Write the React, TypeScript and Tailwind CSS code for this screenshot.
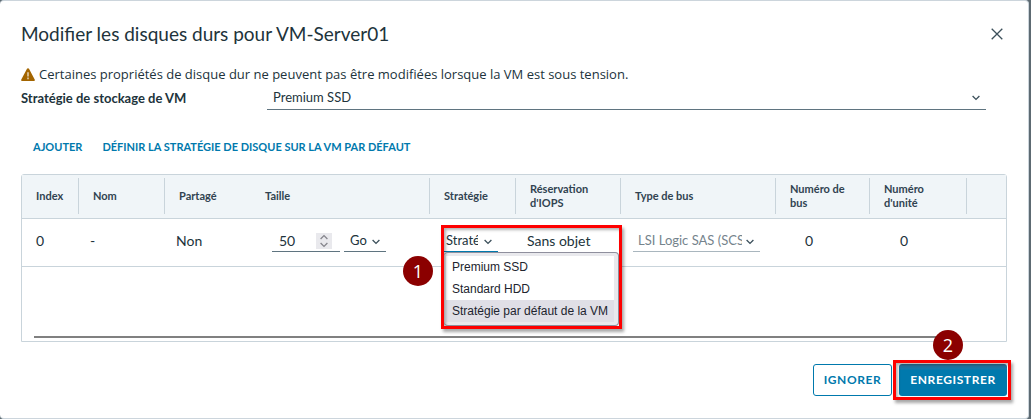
import type { ReactNode } from "react";
import { useState } from "react";

const policies = ["Premium SSD", "Standard HDD", "Stratégie par défaut de la VM"];

const columns = [
  { label: "Index", width: "w-[57px]", divider: true },
  { label: "Nom", width: "w-[86px]", divider: true },
  { label: "Partagé", width: "w-[86px]", divider: false },
  { label: "Taille", width: "w-[179px]", divider: true },
  { label: "Stratégie", width: "w-[86px]", divider: true },
  { label: "Réservation d'IOPS", width: "w-[105px]", divider: true },
  { label: "Type de bus", width: "w-[155px]", divider: true },
  { label: "Numéro de bus", width: "w-[94px]", divider: true },
  { label: "Numéro d'unité", width: "w-[97px]", divider: true },
  { label: "", width: "", divider: false },
];

function Chevron({ className = "" }: { className?: string }) {
  return (
    <svg viewBox="0 0 8 6" className={`h-[6px] w-[8px] ${className}`} fill="none" stroke="currentColor" strokeWidth="1.3">
      <path d="M0.6 1 L4 4.4 L7.4 1" />
    </svg>
  );
}

function WarningIcon() {
  return (
    <svg viewBox="0 0 14 13" className="h-[13px] w-[14px] shrink-0">
      <path d="M7 0.2 C7.5 0.2 7.8 0.4 8 0.8 L13.7 11.4 C14.1 12.2 13.7 13 12.8 13 L1.2 13 C0.3 13 -0.1 12.2 0.3 11.4 L6 0.8 C6.2 0.4 6.5 0.2 7 0.2 Z" fill="#a36500" />
      <path d="M7 4.2 V8.4 M7 9.6 V11.2" stroke="#e6d3b8" strokeWidth="1.5" />
    </svg>
  );
}

type SelectProps = {
  id?: string;
  label?: string;
  value: string;
  options: string[];
  className: string;
  selectClassName: string;
  iconClassName: string;
  disabled?: boolean;
  onChange?: (value: string) => void;
};

function Select({ id, label, value, options, className, selectClassName, iconClassName, disabled, onChange }: SelectProps) {
  return (
    <div className={`relative border-b ${className}`}>
      <select
        id={id}
        aria-label={label}
        value={value}
        disabled={disabled}
        onChange={(e) => onChange?.(e.target.value)}
        className={`block w-full appearance-none bg-transparent outline-none disabled:opacity-100 ${selectClassName}`}
      >
        {options.map((option) => (
          <option key={option}>{option}</option>
        ))}
      </select>
      <Chevron className={`pointer-events-none absolute text-[#3b4f5a] ${iconClassName}`} />
    </div>
  );
}

function StepBadge({ className, children }: { className: string; children: ReactNode }) {
  return (
    <span
      className={`absolute z-20 flex h-[30px] w-[30px] items-center justify-center rounded-full bg-[#8b0000] font-['Open_Sans',sans-serif] text-[18px] font-normal text-white ${className}`}
    >
      {children}
    </span>
  );
}

export default function App() {
  const [storage, setStorage] = useState("Premium SSD");
  const [size, setSize] = useState(50);
  const [unit, setUnit] = useState("Go");
  const [policy, setPolicy] = useState(policies[2]);

  return (
    <div className="bg-[#5d6a72] pr-[2px] font-[Lato,sans-serif] text-[#21333b]">
      <section
        role="dialog"
        aria-labelledby="dialog-title"
        className="rounded-[4px] border-t border-r border-b border-[#ccd5dc] bg-white pt-5 pr-[21px] pb-[22px] pl-[21px]"
      >
        <header className="flex h-[26px] items-center justify-between pr-1">
          <h1 id="dialog-title" className="text-[19px] leading-[26px]">
            Modifier les disques durs pour VM-Server01
          </h1>
          <button aria-label="Fermer" className="text-[#3b4f5a]">
            <svg viewBox="0 0 12 12" className="h-3 w-3" fill="none" stroke="currentColor" strokeWidth="1.3">
              <path d="M0.7 0.7 L11.3 11.3 M11.3 0.7 L0.7 11.3" />
            </svg>
          </button>
        </header>

        <p className="mt-[17px] flex h-[21px] items-center gap-1 font-['Open_Sans',sans-serif] text-[13px]">
          <WarningIcon />
          Certaines propriétés de disque dur ne peuvent pas être modifiées lorsque la VM est sous tension.
        </p>

        <div className="flex h-6 items-center pr-[21px]">
          <label htmlFor="storage-policy" className="w-[246px] shrink-0 pt-[3px] text-[13px] font-bold">
            Stratégie de stockage de VM
          </label>
          <Select
            id="storage-policy"
            value={storage}
            options={policies}
            onChange={setStorage}
            className="flex-1 border-[#5f7480]"
            selectClassName="h-6 pt-[3px] pr-6 pl-[6px] text-[13px]"
            iconClassName="top-[10px] right-[6px]"
          />
        </div>

        <div className="mt-7 flex h-5 items-center gap-5 pl-3 text-[11px] font-bold text-[#0079ad]">
          <button>AJOUTER</button>
          <button>DÉFINIR LA STRATÉGIE DE DISQUE SUR LA VM PAR DÉFAUT</button>
        </div>

        <div className="mt-[17px] h-[168px] rounded-t-[3px] border border-[#c9d4db]">
          <table className="w-full table-fixed border-collapse text-left">
            <thead className="bg-[#f0f5f8]">
              <tr className="h-[43px] border-b border-[#c9d4db]">
                {columns.map((col, index) => (
                  <th key={index} className={`p-0 text-[11px] leading-[14px] font-bold text-[#314351] ${col.width}`}>
                    <div className={`flex h-9 items-center pr-2 pl-[14px] ${col.divider ? "border-r border-[#c9d4db]" : ""}`}>
                      {col.label}
                    </div>
                  </th>
                ))}
              </tr>
            </thead>
            <tbody>
              <tr className="h-[48px] border-b border-[#c9d4db] text-[14px]">
                <td className="pt-0 pr-0 pb-[3px] pl-[14px]">0</td>
                <td className="pt-0 pr-0 pb-[3px] pl-[11px]">-</td>
                <td className="pt-0 pr-0 pb-[3px] pl-[11px]">Non</td>
                <td className="pt-0 pr-0 pb-[2px] pl-[21px]">
                  <div className="flex gap-1">
                    <div className="flex h-[22px] w-[68px] items-center border-b border-[#5f7480] pr-2 pl-[7px]">
                      <input
                        type="number"
                        aria-label="Taille"
                        value={size}
                        onChange={(e) => setSize(Number(e.target.value))}
                        className="w-0 flex-1 bg-transparent text-[14px] outline-none [appearance:textfield] [&::-webkit-inner-spin-button]:appearance-none"
                      />
                      <div className="flex h-4 w-4 flex-col items-center justify-center gap-[2px] bg-[#e9e9ed] text-[#85858c]">
                        <button aria-label="Augmenter" onClick={() => setSize(size + 1)}>
                          <Chevron className="block h-[5px] rotate-180" />
                        </button>
                        <button aria-label="Diminuer" onClick={() => setSize(size - 1)}>
                          <Chevron className="block h-[5px]" />
                        </button>
                      </div>
                    </div>
                    <Select
                      label="Unité"
                      value={unit}
                      options={["Mo", "Go", "To"]}
                      onChange={setUnit}
                      className="w-[42px] border-[#5f7480]"
                      selectClassName="h-[21px] pr-4 pl-[6px] text-[13px]"
                      iconClassName="top-[9px] right-[6px]"
                    />
                  </div>
                </td>
                <td className="pt-0 pr-0 pb-[2px] pl-[14px]">
                  <div className="relative">
                    <Select
                      label="Stratégie"
                      value={policy}
                      options={policies}
                      onChange={setPolicy}
                      className="w-[54px] border-[#0079ad]"
                      selectClassName="h-[21px] pr-5 pl-[2px] text-[13px]"
                      iconClassName="top-[9px] right-[6px]"
                    />
                    <ul
                      role="listbox"
                      aria-label="Stratégies disponibles"
                      className="absolute top-[22px] left-0 z-10 w-[175px] rounded-[4px] border-t border-r border-b border-[#8f8f9d] bg-[#e9e9ed] py-[3px] pr-1 pl-[2px] font-['Liberation_Sans',sans-serif] text-[12px] text-[#21242e]"
                    >
                      {policies.map((item) => (
                        <li
                          key={item}
                          role="option"
                          aria-selected={item === policy}
                          onClick={() => setPolicy(item)}
                          className={`flex h-[22px] items-center pl-[6px] whitespace-nowrap ${item === policy ? "bg-[#e0dfe6]" : "bg-white"}`}
                        >
                          {item}
                        </li>
                      ))}
                    </ul>
                    <div className="pointer-events-none absolute -top-[5px] -left-[3px] z-20 h-[104px] w-[181px] border-[3px] border-[#fe0000] shadow-[2px_3px_3px_rgba(0,0,0,0.35),inset_2px_2px_3px_rgba(0,0,0,0.3)]" />
                    <StepBadge className="top-[26px] -left-[41px]">1</StepBadge>
                  </div>
                </td>
                <td className="pt-0 pr-0 pb-[3px] pl-[11px]">Sans objet</td>
                <td className="pt-0 pr-0 pb-[2px] pl-3">
                  <Select
                    label="Type de bus"
                    value="LSI Logic SAS (SCSI)"
                    options={["LSI Logic SAS (SCSI)"]}
                    disabled
                    className="w-[127px] border-[#a9b6be]"
                    selectClassName="h-[21px] pr-[18px] pl-[5px] text-[13px] text-[#75838c]"
                    iconClassName="top-[9px] right-[6px]"
                  />
                </td>
                <td className="pt-0 pr-0 pb-[3px] pl-[29px]">0</td>
                <td className="pt-0 pr-0 pb-[3px] pl-[30px]">0</td>
                <td />
              </tr>
            </tbody>
          </table>
          <div className="mt-[69px] mr-[70px] ml-3 h-[2px] bg-[#808080]" />
        </div>

        <footer className="mt-[22px] flex justify-end gap-[7px] text-[12px] font-bold">
          <button className="h-8 w-[79px] rounded-[3px] border border-[#0079ad] tracking-wider text-[#0079ad]">IGNORER</button>
          <div className="relative">
            <button className="h-8 w-[108px] rounded-[3px] bg-[#0079ad] bg-linear-to-b from-[#2f6f96] to-[#0079ad] to-20% tracking-wider text-white">
              ENREGISTRER
            </button>
            <div className="pointer-events-none absolute -top-1 -right-1 -bottom-1 -left-[6px] border-[3px] border-[#fe0000] shadow-[2px_3px_3px_rgba(0,0,0,0.35),inset_2px_2px_3px_rgba(0,0,0,0.3)]" />
            <StepBadge className="-top-[34px] left-[34px]">2</StepBadge>
          </div>
        </footer>
      </section>
    </div>
  );
}
